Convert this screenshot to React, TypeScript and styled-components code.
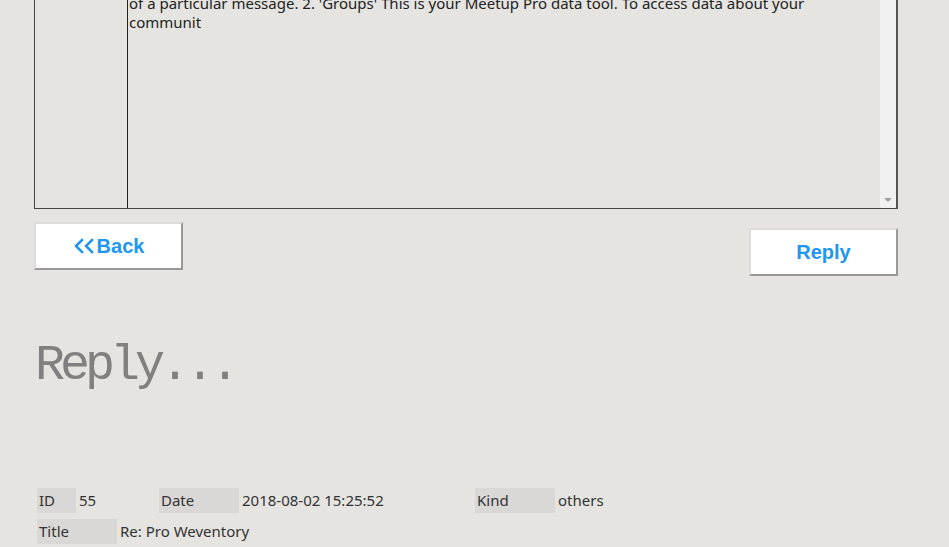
import React from "react";
import styled, { createGlobalStyle } from "styled-components";

const Global = createGlobalStyle`
  html, body { margin: 0; padding: 0; background: #e5e4e0; }
  body { font-family: "Noto Sans", "Open Sans", sans-serif; color: #222; overflow: hidden; }
`;

const Page = styled.div`
  width: 949px;
  height: 547px;
  overflow: hidden;
  padding: 0 51px 0 34px;
  box-sizing: border-box;
`;

const MessageBox = styled.div`
  margin-top: -47px;
  height: 256px;
  display: flex;
  border: 1px solid #444;
  border-right: 2px solid #555;
  box-sizing: border-box;
`;

const SideCell = styled.div`
  width: 92px;
  border-right: 1px solid #222;
  flex: none;
`;

const BodyCell = styled.div`
  flex: 1;
  display: flex;
  min-width: 0;
`;

const BodyText = styled.div`
  flex: 1;
  padding: 2px 0 0 1px;
  font-size: 15px;
  line-height: 19px;
  color: #222;
  white-space: pre-line;
  overflow: hidden;
`;

const Scrollbar = styled.div`
  width: 16px;
  flex: none;
  background: #f0f0f0;
  display: flex;
  flex-direction: column;
  justify-content: flex-end;
  align-items: center;
  padding-bottom: 6px;
  box-sizing: border-box;
`;

const ArrowDown = styled.div`
  width: 0;
  height: 0;
  border-left: 4px solid transparent;
  border-right: 4px solid transparent;
  border-top: 4px solid #a0a0a0;
`;

const ButtonRow = styled.div`
  display: flex;
  justify-content: space-between;
  align-items: flex-start;
`;

const ActionButton = styled.button<{ $top: number }>`
  margin-top: ${(p) => p.$top}px;
  width: 149px;
  height: 48px;
  background: #fff;
  border-style: solid;
  border-width: 2px;
  border-color: #dcdcdc #999 #999 #dcdcdc;
  box-sizing: border-box;
  color: #2196f3;
  font-family: "Liberation Sans", Arial, sans-serif;
  font-weight: bold;
  font-size: 20px;
  display: flex;
  align-items: center;
  justify-content: center;
  gap: 2px;
  padding: 0;
  cursor: pointer;
`;

const Heading = styled.h1`
  margin: 60px 0 0 1px;
  font-family: "Liberation Mono", "DejaVu Sans Mono", monospace;
  font-weight: normal;
  font-size: 50px;
  letter-spacing: -5px;
  color: #808080;
  line-height: 60px;
`;

const InfoTable = styled.div`
  margin: 92px 0 0 3px;
  display: flex;
  flex-direction: column;
  gap: 6px;
`;

const InfoRow = styled.div`
  display: flex;
  gap: 3px;
  height: 25px;
`;

const Label = styled.div<{ $w: number }>`
  width: ${(p) => p.$w}px;
  background: #d9d8d6;
  padding-left: 2px;
  box-sizing: border-box;
  font-size: 15px;
  line-height: 25px;
  color: #333;
`;

const Value = styled.div<{ $w?: number }>`
  width: ${(p) => (p.$w ? `${p.$w}px` : "auto")};
  font-size: 15px;
  line-height: 25px;
  color: #333;
`;

const Chevrons = () => (
  <svg width="22" height="16" viewBox="0 0 22 16" fill="none" stroke="#2196f3" strokeWidth="2.6" strokeLinecap="square">
    <path d="M9 2 L3 8 L9 14" />
    <path d="M19 2 L13 8 L19 14" />
  </svg>
);

export default function App() {
  return (
    <>
      <Global />
      <Page>
        <MessageBox>
          <SideCell />
          <BodyCell>
            <BodyText>
              {"Meetup Pro lets you see all of your groups' activity.\n1. 'Messages' lets you view and reply to the members\nof a particular message. 2. 'Groups' This is your Meetup Pro data tool. To access data about your\ncommunit"}
            </BodyText>
            <Scrollbar>
              <ArrowDown />
            </Scrollbar>
          </BodyCell>
        </MessageBox>
        <ButtonRow>
          <ActionButton $top={13}>
            <Chevrons />
            Back
          </ActionButton>
          <ActionButton $top={19}>Reply</ActionButton>
        </ButtonRow>
        <Heading>Reply...</Heading>
        <InfoTable>
          <InfoRow>
            <Label $w={39}>ID</Label>
            <Value $w={77}>55</Value>
            <Label $w={80}>Date</Label>
            <Value $w={230}>2018-08-02 15:25:52</Value>
            <Label $w={80}>Kind</Label>
            <Value>others</Value>
          </InfoRow>
          <InfoRow>
            <Label $w={80}>Title</Label>
            <Value>Re: Pro Weventory</Value>
          </InfoRow>
        </InfoTable>
      </Page>
    </>
  );
}
